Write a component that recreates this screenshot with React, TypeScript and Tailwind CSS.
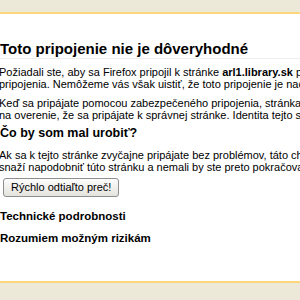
import React from "react";

const font = { fontFamily: '"Liberation Sans", Arial, sans-serif' };

export default function App() {
  return (
    <div className="w-[300px] h-[300px] overflow-hidden flex flex-col bg-white text-black" style={font}>
      <div className="h-[14px] shrink-0 bg-[#ECE9D8] border-b-2 border-[#FFD67A]" />
      <div className="flex-1 overflow-hidden">
        <div className="w-[600px] -ml-[1px] pt-[26px]">
          <h1 className="text-[15px] font-bold leading-[18px] pl-[1px] border-b border-[#EEEEEE]">
            Toto pripojenie nie je dôveryhodné
          </h1>
          <div className="text-[11px] leading-[12px] whitespace-nowrap mt-[7px]">
            <p>
              Požiadali ste, aby sa Firefox pripojil k stránke <b>arl1.library.sk</b> prostredníctvom zabezpečeného
            </p>
            <p>pripojenia. Nemôžeme vás však uistiť, že toto pripojenie je naozaj zabezpečené.</p>
          </div>
          <div className="text-[11px] leading-[12px] whitespace-nowrap mt-[7px]">
            <p>Keď sa pripájate pomocou zabezpečeného pripojenia, stránka zvyčajne poskytne dôveryhodnú identifikáciu,</p>
            <p>na overenie, že sa pripájate k správnej stránke. Identita tejto stránky však nemôže byť overená.</p>
          </div>
          <h2 className="text-[12.5px] font-bold leading-[14px] mt-[5px] pl-[1px]">Čo by som mal urobiť?</h2>
          <div className="text-[11px] leading-[12px] whitespace-nowrap mt-[9px]">
            <p>Ak sa k tejto stránke zvyčajne pripájate bez problémov, táto chyba môže znamenať, že sa niekto</p>
            <p>snaží napodobniť túto stránku a nemali by ste preto pokračovať.</p>
          </div>
          <button className="ml-[4px] mt-[5px] h-[19px] px-[7px] text-[11px] leading-[15px] border border-[#8E8F8F] rounded-[3px] bg-gradient-to-b from-[#FDFDFD] to-[#E4E3DD]">
            Rýchlo odtiaľto preč!
          </button>
          <h3 className="text-[11.5px] font-bold leading-[14px] mt-[11px] pl-[1px]">Technické podrobnosti</h3>
          <h3 className="text-[11.5px] font-bold leading-[14px] mt-[8px] pl-[1px]">Rozumiem možným rizikám</h3>
        </div>
      </div>
      <div className="h-[19px] shrink-0 bg-[#ECE9D8] border-t-2 border-[#FFD67A]" />
    </div>
  );
}
